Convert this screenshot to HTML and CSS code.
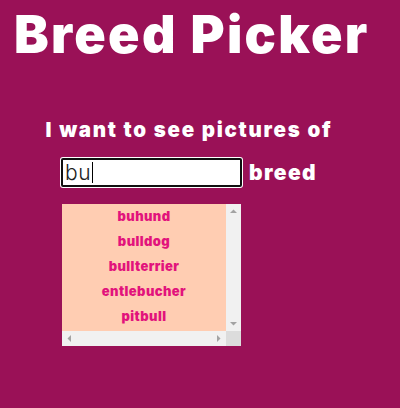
FILE: index.html
```html
<!DOCTYPE html>
<html lang="en">
<head>
<meta charset="utf-8">
<title>Breed Picker</title>
<link rel="stylesheet" href="styles.css">
</head>
<body>
<h1 class="title">Breed Picker</h1>
<main class="picker">
  <p class="lead">I want to see pictures of</p>
  <div class="row">
    <div class="field" role="textbox"><span class="value">bu</span><span class="caret"></span></div>
    <span class="suffix">breed</span>
  </div>
  <div class="listbox">
    <ul class="list">
      <li>buhund</li>
      <li>bulldog</li>
      <li>bullterrier</li>
      <li>entlebucher</li>
      <li>pitbull</li>
    </ul>
    <div class="vbar" aria-hidden="true">
      <svg class="arrow" width="15" height="15" viewBox="0 0 15 15"><polygon points="4,9 11,9 7.5,5.5"/></svg>
      <svg class="arrow" width="15" height="15" viewBox="0 0 15 15"><polygon points="4,6 11,6 7.5,9.5"/></svg>
    </div>
    <div class="hbar" aria-hidden="true">
      <svg class="arrow" width="15" height="15" viewBox="0 0 15 15"><polygon points="9,4 9,11 5.5,7.5"/></svg>
      <svg class="arrow" width="15" height="15" viewBox="0 0 15 15"><polygon points="6,4 6,11 9.5,7.5"/></svg>
    </div>
    <div class="corner"></div>
  </div>
</main>
</body>
</html>
```
FILE: styles.css
```css
html, body {
  margin: 0;
  padding: 0;
  background: #9a1157;
  height: 100%;
}
body {
  font-family: Inter, "DejaVu Sans", sans-serif;
  color: #fff;
}
.title {
  margin: 0;
  padding: 4px 0 0 14px;
  font-size: 52px;
  font-weight: 900;
  line-height: 62px;
  letter-spacing: 2.3px;
}
.picker {
  display: flex;
  flex-direction: column;
  align-items: flex-start;
  padding-top: 50px;
}
.lead {
  margin: 0;
  width: 378px;
  text-align: center;
  font-size: 20.5px;
  font-weight: 900;
  line-height: 28px;
  letter-spacing: 1.75px;
}
.row {
  display: flex;
  align-items: center;
  gap: 7px;
  margin: 14px 0 0 61px;
}
.field {
  box-sizing: border-box;
  width: 181px;
  height: 29px;
  background: #fff;
  border: 2px solid #101010;
  box-shadow: 0 0 0 1px #fff;
  border-radius: 2px;
  display: flex;
  align-items: center;
  padding-left: 2px;
  color: #222;
  font-size: 21px;
  font-weight: 300;
  letter-spacing: 0.5px;
}
.caret {
  width: 1px;
  height: 21px;
  background: #000;
  margin-left: 1px;
}
.suffix {
  font-size: 21px;
  font-weight: 900;
  letter-spacing: 1.4px;
}
.listbox {
  display: grid;
  grid-template-columns: 164px 15px;
  grid-template-rows: 127px 15px;
  margin: 17px 0 0 62px;
}
.list {
  list-style: none;
  margin: 0;
  padding: 0;
  overflow: hidden;
  background: #ffcdb2;
}
.list li {
  text-align: center;
  color: #e2137c;
  font-size: 13px;
  font-weight: 900;
  line-height: 25.1px;
  letter-spacing: 0.4px;
}
.vbar {
  display: flex;
  flex-direction: column;
  justify-content: space-between;
  background: #f1f1f1;
}
.hbar {
  display: flex;
  justify-content: space-between;
  background: #f1f1f1;
}
.arrow {
  display: block;
  fill: #a3a3a3;
}
.corner {
  background: #dcdcdc;
}
```
